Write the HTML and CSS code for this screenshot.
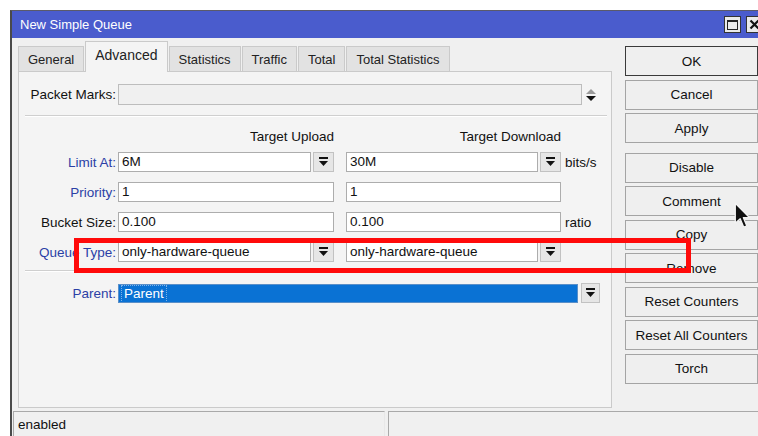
FILE: index.html
```html
<!DOCTYPE html>
<html>
<head>
<meta charset="utf-8">
<title>New Simple Queue</title>
<link rel="stylesheet" href="styles.css">
</head>
<body>
<div class="window">
  <div class="titlebar">
    <span class="title">New Simple Queue</span>
    <div class="controls">
      <span class="ctl ctl-max"><i></i></span>
      <span class="ctl ctl-close">
        <svg width="11" height="11" viewBox="0 0 11 11"><path d="M1.5 1.5 L9.5 9.5 M9.5 1.5 L1.5 9.5" stroke="#111" stroke-width="2.2"/></svg>
      </span>
    </div>
  </div>

  <div class="main">
    <div class="left">
      <div class="tabs">
        <span class="tab">General</span>
        <span class="tab active">Advanced</span>
        <span class="tab">Statistics</span>
        <span class="tab">Traffic</span>
        <span class="tab">Total</span>
        <span class="tab">Total Statistics</span>
      </div>

      <div class="panel">
        <div class="row row-marks">
          <span class="lbl">Packet Marks:</span>
          <div class="field field-marks disabled"></div>
          <svg class="spin" width="10" height="12" viewBox="0 0 10 12">
            <polygon points="5,0 10,5 0,5" fill="#9a9a9a"/>
            <polygon points="0,7 10,7 5,12" fill="#111"/>
          </svg>
        </div>

        <div class="sep"></div>

        <div class="row row-head">
          <span class="lbl"></span>
          <span class="colhead col1">Target Upload</span>
          <span class="colhead col2">Target Download</span>
        </div>

        <div class="row row-limit">
          <span class="lbl blue">Limit At:</span>
          <div class="pair col1">
            <div class="field">6M</div>
            <span class="drop"><svg width="9" height="10" viewBox="0 0 9 10"><rect x="0" y="0" width="9" height="2" fill="#111"/><polygon points="0,4 9,4 4.5,9" fill="#111"/></svg></span>
          </div>
          <div class="pair col2">
            <div class="field">30M</div>
            <span class="drop"><svg width="9" height="10" viewBox="0 0 9 10"><rect x="0" y="0" width="9" height="2" fill="#111"/><polygon points="0,4 9,4 4.5,9" fill="#111"/></svg></span>
          </div>
          <span class="unit">bits/s</span>
        </div>

        <div class="row">
          <span class="lbl blue">Priority:</span>
          <div class="pair col1"><div class="field">1</div></div>
          <div class="pair col2"><div class="field">1</div></div>
        </div>

        <div class="row">
          <span class="lbl">Bucket Size:</span>
          <div class="pair col1"><div class="field">0.100</div></div>
          <div class="pair col2"><div class="field">0.100</div></div>
          <span class="unit">ratio</span>
        </div>

        <div class="row">
          <span class="lbl blue">Queue Type:</span>
          <div class="pair col1">
            <div class="field">only-hardware-queue</div>
            <span class="drop"><svg width="9" height="10" viewBox="0 0 9 10"><rect x="0" y="0" width="9" height="2" fill="#111"/><polygon points="0,4 9,4 4.5,9" fill="#111"/></svg></span>
          </div>
          <div class="pair col2">
            <div class="field">only-hardware-queue</div>
            <span class="drop"><svg width="9" height="10" viewBox="0 0 9 10"><rect x="0" y="0" width="9" height="2" fill="#111"/><polygon points="0,4 9,4 4.5,9" fill="#111"/></svg></span>
          </div>
        </div>

        <div class="sep sep-lower"></div>

        <div class="row row-parent">
          <span class="lbl blue">Parent:</span>
          <div class="field field-parent"><span class="sel">Parent</span></div>
          <span class="drop drop-parent"><svg width="9" height="10" viewBox="0 0 9 10"><rect x="0" y="0" width="9" height="2" fill="#111"/><polygon points="0,4 9,4 4.5,9" fill="#111"/></svg></span>
        </div>
      </div>
    </div>

    <div class="buttons">
      <span class="btn default">OK</span>
      <span class="btn">Cancel</span>
      <span class="btn">Apply</span>
      <span class="btn btn-group">Disable</span>
      <span class="btn">Comment</span>
      <span class="btn">Copy</span>
      <span class="btn">Remove</span>
      <span class="btn">Reset Counters</span>
      <span class="btn">Reset All Counters</span>
      <span class="btn">Torch</span>
    </div>
  </div>

  <div class="status">
    <div class="cell cell-state">enabled</div>
    <div class="cell cell-rest"></div>
  </div>
</div>

<div class="highlight"></div>

<svg class="cursor" width="18" height="27" viewBox="0 0 14 21">
  <path d="M1 1 L1 16.5 L4.8 13 L7.6 19.6 L10 18.6 L7.3 12.2 L12.2 12.2 Z" fill="#111" stroke="#f4f4f4" stroke-width="1" stroke-linejoin="round"/>
</svg>
</body>
</html>
```

FILE: styles.css
```css
html, body {
  margin: 0;
  padding: 0;
}

body {
  width: 758px;
  height: 436px;
  overflow: hidden;
  background: #ffffff;
  font-family: "Liberation Sans", Arial, sans-serif;
  font-size: 13.5px;
  color: #111;
  position: relative;
}

.window {
  margin: 10px 0 0 10px;
  width: 770px;
  height: 440px;
  background: #f0f0f0;
  border-left: 2px solid #4a4a4a;
  border-top: 1px solid #5a5a6a;
  box-sizing: border-box;
}

/* title bar */
.titlebar {
  height: 27px;
  background: #4a5ccd;
  display: flex;
  align-items: center;
  padding-left: 8px;
}

.title {
  color: #fff;
  font-size: 13px;
  flex: 1;
}

.controls {
  display: flex;
  gap: 5px;
  margin-right: 17px;
}

.ctl {
  width: 17px;
  height: 17px;
  box-sizing: border-box;
  background: #eaeaea;
  border: 1px solid #333;
  display: flex;
  align-items: center;
  justify-content: center;
}

.ctl-max i {
  display: block;
  width: 9px;
  height: 7px;
  border: 1px solid #222;
  border-top-width: 2px;
}

/* body of the dialog */
.main {
  display: flex;
  padding: 3px 0 0 6px;
  gap: 13px;
  height: 371px;
  box-sizing: border-box;
}

.left {
  width: 594px;
  display: flex;
  flex-direction: column;
}

.tabs {
  display: flex;
  align-items: flex-end;
  height: 30px;
  gap: 1px;
  font-size: 13px;
}

.tab {
  height: 25px;
  box-sizing: border-box;
  padding: 0 9px;
  display: flex;
  align-items: center;
  background: #e2e2e2;
  border: 1px solid #cacaca;
  border-bottom: none;
  color: #222;
}

.tab.active {
  height: 31px;
  margin-bottom: -1px;
  padding: 0 9px 5px 9px;
  font-size: 14px;
  background: #f4f4f4;
  position: relative;
  z-index: 1;
}

.panel {
  height: 337px;
  box-sizing: border-box;
  border: 1px solid #cacaca;
  background: #f4f4f4;
  padding-top: 12px;
}

.row {
  display: flex;
  align-items: center;
  height: 20px;
  margin-bottom: 10px;
}

.row-marks {
  height: 21px;
  margin-bottom: 10px;
}

.lbl {
  width: 97px;
  margin-right: 2px;
  text-align: right;
  white-space: nowrap;
  color: #111;
}

.lbl.blue {
  color: #2b3fa6;
}

.field {
  height: 20px;
  box-sizing: border-box;
  background: #fff;
  border: 1px solid #adadad;
  padding-left: 3px;
  line-height: 18px;
  white-space: nowrap;
  overflow: hidden;
  color: #111;
}

.field.disabled {
  background: #f0f0f0;
  border-color: #bdbdbd;
}

.field-marks {
  width: 464px;
  height: 21px;
}

.spin {
  margin-left: 4px;
}

.sep {
  height: 1px;
  background: #cfcfcf;
  border-bottom: 1px solid #fff;
  margin: 0 4px 0 6px;
}

.row-head {
  margin-top: 11px;
  height: 16px;
  margin-bottom: 8px;
}

.colhead {
  text-align: right;
}

.col1 {
  width: 216px;
}

.col2 {
  width: 215px;
  margin-left: 12px;
}

.pair {
  display: flex;
  gap: 2px;
}

.pair .field {
  flex: 1;
}

.drop {
  width: 21px;
  height: 20px;
  box-sizing: border-box;
  background: #e6e6e6;
  border: 1px solid #c2c2c2;
  display: flex;
  align-items: center;
  justify-content: center;
}

.unit {
  margin-left: 4px;
}

.sep-lower {
  margin-top: -2px;
}

.row-parent {
  margin-top: 11px;
}

.field-parent {
  width: 460px;
  height: 19px;
  background: #0a72d4;
  border-color: #5a8fc8;
  padding-left: 2px;
  line-height: 16px;
}

.sel {
  display: inline-block;
  color: #fff;
  padding: 0 2px;
  border: 1px dotted #7fb2e8;
}

.drop-parent {
  width: 19px;
  margin-left: 3px;
}

/* right button column */
.buttons {
  width: 133px;
  display: flex;
  flex-direction: column;
  gap: 3.5px;
  padding-top: 5px;
}

.btn {
  height: 30px;
  box-sizing: border-box;
  border: 1px solid #a4a4a4;
  background: #efefef;
  display: flex;
  align-items: center;
  justify-content: center;
  color: #111;
  white-space: nowrap;
}

.btn.default {
  border-color: #3a3a3a;
}

.btn-group {
  margin-top: 6px;
}

/* status bar */
.status {
  display: flex;
  gap: 3px;
  padding: 2px 0 0 1px;
}

.cell {
  height: 26px;
  box-sizing: border-box;
  border: 1px solid #a9a9a9;
  border-right-color: #e8e8e8;
  border-bottom: none;
  display: flex;
  align-items: center;
  padding-left: 4px;
}

.cell-state {
  width: 372px;
}

.cell-rest {
  flex: 1;
}

/* red annotation frame drawn over the form */
.highlight {
  position: absolute;
  left: 74px;
  top: 238px;
  width: 617px;
  height: 35px;
  box-sizing: border-box;
  border: 5px solid #ff0a0a;
}

.cursor {
  position: absolute;
  left: 734px;
  top: 202px;
}
```
